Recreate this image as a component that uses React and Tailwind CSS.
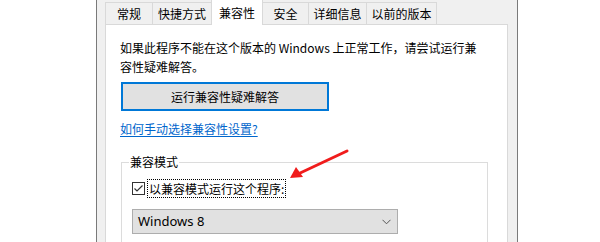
import React from "react";

const tabs = [
  { label: "常规", w: "w-[48px]" },
  { label: "快捷方式", w: "w-[60px]" },
  { label: "兼容性", w: "w-[52px]", active: true },
  { label: "安全", w: "w-[47px]" },
  { label: "详细信息", w: "w-[59px]" },
  { label: "以前的版本", w: "w-[71px]" },
];

const font = "font-['Noto_Sans_CJK_SC','Noto_Sans',sans-serif]";

const App = () => {
  return (
    <div className={`w-[600px] h-[242px] bg-white flex overflow-hidden text-[12px] text-black ${font}`}>
      <div className="w-[96px] shrink-0" />
      <div className="w-[422px] h-full shrink-0 bg-[#f0f0f0] border-x border-[#7a7a7a] pl-[8px] pr-[9px] flex flex-col">
        {/* tab strip */}
        <div className="h-[24px] flex items-end pl-[1px] shrink-0">
          {tabs.map((t) =>
            t.active ? (
              <div
                key={t.label}
                className={`${t.w} h-[25px] -mb-[1px] -ml-[1px] bg-white border-x border-[#d9d9d9] flex items-center justify-center relative z-10`}
              >
                {t.label}
              </div>
            ) : (
              <div
                key={t.label}
                className={`${t.w} h-[22px] -ml-[1px] bg-[#f0f0f0] border border-b-0 border-[#d9d9d9] flex items-center justify-center`}
              >
                {t.label}
              </div>
            )
          )}
        </div>
        {/* panel */}
        <div className="flex-1 bg-white border border-b-0 border-[#d9d9d9] pl-[14px] pr-[18px] pt-[13px] relative">
          <p className="leading-[19px]">
            如果此程序不能在这个版本的 Windows 上正常工作，请尝试运行兼
            <br />
            容性疑难解答。
          </p>
          <button className="mt-[6px] ml-[1px] w-[208px] h-[29px] bg-[#e1e1e1] border-2 border-[#0078d7] flex items-center justify-center">
            运行兼容性疑难解答
          </button>
          <div className="mt-[10px] leading-[16px]">
            <span className="text-[#0066cc] underline underline-offset-2">如何手动选择兼容性设置?</span>
          </div>
          {/* group box */}
          <div className="mt-[25px] ml-[1px] relative border border-[#dcdcdc] w-[367px] h-[90px] pt-[16px] pl-[10px]">
            <span className="absolute -top-[10px] left-[7px] bg-white px-[1px] leading-[18px]">兼容模式</span>
            <div className="flex items-center h-[19px]">
              <div className="w-[13px] h-[13px] border border-[#333333] bg-white flex items-center justify-center">
                <svg width="11" height="11" viewBox="0 0 11 11">
                  <path d="M1.5 5.5 L4 8 L9.5 2.5" fill="none" stroke="#333" strokeWidth="1.2" />
                </svg>
              </div>
              <div className="ml-[2px] h-[19px] px-[1px] border border-dotted border-black flex items-center">
                以兼容模式运行这个程序:
              </div>
            </div>
            <div className="mt-[11px] w-[266px] h-[25px] bg-[#e1e1e1] border border-[#adadad] flex items-center justify-between pl-[5px] pr-[6px] font-['Noto_Sans',sans-serif] text-[13px]">
              <span>Windows 8</span>
              <svg width="9" height="6" viewBox="0 0 9 6">
                <path d="M0.5 0.8 L4.5 4.8 L8.5 0.8" fill="none" stroke="#555" strokeWidth="1" />
              </svg>
            </div>
          </div>
          {/* annotation arrow */}
          <svg className="absolute left-[180px] top-[123px]" width="70" height="34" viewBox="0 0 70 34">
            <path d="M61 3 L12 26" stroke="#f01c1c" strokeWidth="3" strokeLinecap="round" />
            <path d="M4 30 L10 19 L17 29 Z" fill="#f01c1c" />
          </svg>
        </div>
      </div>
    </div>
  );
};

export default App;
